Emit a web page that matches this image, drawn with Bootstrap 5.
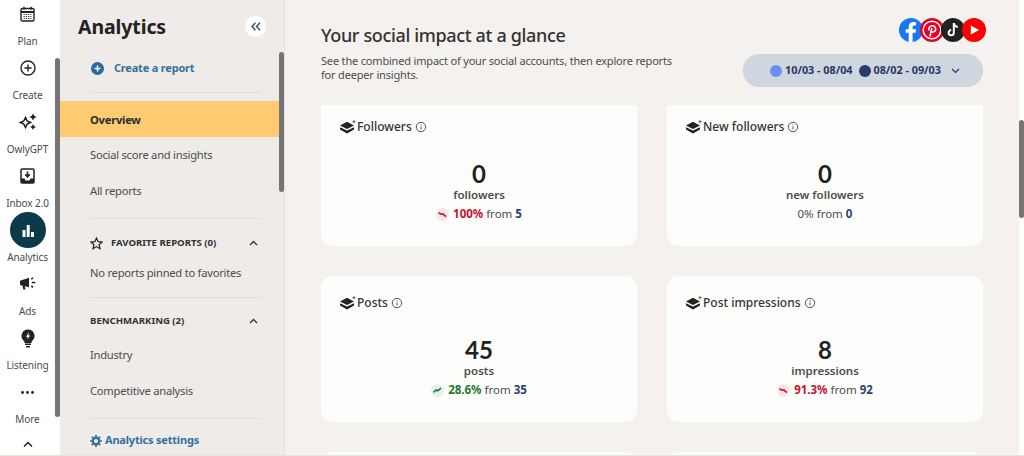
<!DOCTYPE html>
<html lang="en">
<head>
  <meta charset="UTF-8">
  <title>Analytics</title>
  <link rel="stylesheet" href="https://cdn.jsdelivr.net/npm/bootstrap@5.3.3/dist/css/bootstrap.min.css">
  <style>
    html, body { height: 456px; overflow: hidden; }
    body { font-family: "Noto Sans", "Liberation Sans", sans-serif; color: #2b2b2b; background: #fff; font-size: 12px; }
    .shell { width: 1024px; height: 456px; border-bottom: 1px solid #e8e6d8; overflow: hidden; }
    .rail { width: 60px; height: 456px; background: #fff; position: relative; flex: none; }
    .rail-thumb { position: absolute; left: 55px; top: 58px; width: 5px; height: 359px; background: #757575; border-radius: 3px; }
    .rail-item { width: 55px; height: 54px; color: #4b4b4b; font-size: 10px; letter-spacing: -.1px; }
    .rail-icon { height: 28px; }
    .rail-label { height: 26px; line-height: 26px; }
    .rail-dark { width: 36px; height: 36px; border-radius: 50%; background: #0c3a4a; margin-top: -4px; margin-bottom: -4px; flex: none; }
    .rail-more { width: 55px; padding-top: 9px; }
    .side { width: 225px; height: 456px; background: #eeebe8; border-right: 1px solid #e3e0dd; position: relative; flex: none; }
    .side-thumb { position: absolute; left: 219px; top: 52px; width: 5px; height: 140px; background: #757575; border-radius: 3px; }
    .side-title { font-size: 19.5px; font-weight: 700; color: #222; height: 54px; padding-left: 18px; line-height: 54px; letter-spacing: -.1px; }
    .collapse-btn { position: absolute; left: 185px; top: 16px; width: 21px; height: 21px; border-radius: 50%; background: #fff; }
    .create-row { height: 28px; padding-left: 31px; color: #35709f; font-weight: 700; font-size: 11px; letter-spacing: -.2px; gap: 10px; }
    .side-rule { height: 1px; background: #dfdcd9; margin-left: 30px; width: 171px; margin-top: 9px; }
    .create-row + .side-rule { margin-top: 10px; }
    .side-link { height: 36px; line-height: 36px; padding-left: 30px; width: 219px; color: #4d4d4d; font-size: 11.2px; letter-spacing: -.25px; }
    .side-link.active-link { background: #fecb72; color: #2b2b2b; font-weight: 700; line-height: 37px; margin-top: 8px; }
    .side-link.pinned-empty { margin-top: 8px; height: 30px; line-height: 30px; }
    .side-link.bench-first { margin-top: 9px; }
    .side-head { padding-left: 30px; width: 198px; color: #333; font-weight: 700; font-size: 9.6px; height: 14px; margin-top: 17px; }
    .side-head.bench-head { margin-top: 16px; }
    .settings-row { padding-left: 30px; color: #35709f; font-weight: 700; font-size: 11px; letter-spacing: -.2px; height: 43px; gap: 3px; }
    .main-area { width: 734px; height: 456px; background: #f4f1ee; flex: none; padding-left: 36px; overflow: hidden; }
    .top-block { height: 105px; width: 662px; }
    .page-title { font-size: 18px; font-weight: 500; color: #333; line-height: 24px; padding-top: 23px; margin: 0; letter-spacing: -.35px; }
    .page-sub { font-size: 11px; line-height: 14px; color: #4d4d4d; width: 356px; margin: 7px 0 0; letter-spacing: -.18px; }
    .social-logos { padding-top: 18px; margin-right: -3px; }
    .social-logos svg { margin-left: -3px; display: block; }
    .date-pill { width: 240px; height: 33px; border-radius: 16px; background: #d0d6df; color: #25375f; font-weight: 700; font-size: 10.8px; margin-top: 12px; gap: 3px; padding-left: 4px; }
    .date-dot { width: 12px; height: 12px; border-radius: 50%; }
    .dot-now { background: #6b8ff2; }
    .dot-prev { background: #2a3b6b; margin-left: 3px; }
    .pill-chev { margin-left: 7px; }
    .metric-grid { display: grid; grid-template-columns: 316px 316px; gap: 30px; }
    .metric-tile { height: 146px; background: #fdfdfb; border-radius: 12px; padding: 19px 19px 0; }
    .metric-tile.cut-top { height: 141px; border-top-left-radius: 0; border-top-right-radius: 0; padding-top: 14px; }
    .tile-head { font-size: 12px; color: #333; height: 16px; font-weight: 500; gap: 3px; }
    .tile-head svg:first-child { margin-right: -2px; }
    .tile-body { padding-top: 26px; }
    .tile-num { font-family: Lato, "Noto Sans", sans-serif; font-size: 24px; font-weight: 700; color: #222; line-height: 26px; }
    .tile-unit { font-size: 11.5px; font-weight: 600; color: #4d4d4d; line-height: 16px; }
    .tile-delta { font-size: 11.5px; color: #4d4d4d; line-height: 22px; }
    .delta-dot { width: 13px; height: 13px; border-radius: 50%; }
    .delta-dot.down { background: #f9e4e7; }
    .delta-dot.up { background: #e5f1e7; }
    .txt-down { color: #c2112f; font-weight: 700; }
    .txt-up { color: #1b7a2c; font-weight: 700; }
    .txt-from { color: #2d4274; font-weight: 700; }
    .main-scroll { width: 5px; height: 456px; background: #fff; position: relative; flex: none; }
    .main-thumb { position: absolute; left: 0; top: 120px; width: 5px; height: 98px; background: #757575; border-radius: 3px; }
  </style>
</head>
<body>
  <svg width="0" height="0" class="position-absolute">
    <symbol id="stack-ico" viewBox="0 0 16 14">
      <path d="M7 1.800 14 5.400 7 9 0 5.400z" fill="#222"/>
      <path d="M0 7.200 7 10.600 14 7.200V9.600L7 13.400 0 9.600z" fill="#222"/>
      <path d="M14 0v3.400M12.300 1.700h3.400" stroke="#666" stroke-width="1"/>
    </symbol>
    <symbol id="info-ico" viewBox="0 0 12 12">
      <circle cx="6" cy="6" r="4.700" fill="none" stroke="#555" stroke-width="1"/>
      <path d="M6 5.400v3M6 3.400v1" stroke="#555" stroke-width="1"/>
    </symbol>
    <symbol id="down-ico" viewBox="0 0 13 13">
      <path d="M2.500 4.800 5.200 6.200 6.800 5.800 10 8.600" fill="none" stroke="#c2112f" stroke-width="1.600"/>
    </symbol>
    <symbol id="up-ico" viewBox="0 0 13 13">
      <path d="M2.500 8.400 5.200 6 6.800 6.800 10 4.200" fill="none" stroke="#1b7a2c" stroke-width="1.600"/>
    </symbol>
  </svg>

  <div class="shell d-flex">
    <nav class="rail">
      <div class="rail-thumb"></div>
      <div class="rail-item d-flex flex-column align-items-center">
        <div class="rail-icon d-flex align-items-center">
          <svg width="15" height="16" viewBox="0 0 15 16"><rect x="1" y="2.500" width="13" height="12.500" rx="1.500" fill="none" stroke="#222" stroke-width="1.400"/><path d="M1 6h13" stroke="#222" stroke-width="2"/><path d="M4 .8v3M11 .8v3" stroke="#222" stroke-width="1.400"/><path d="M3.500 8.500h8M3.500 10.500h8M3.500 12.500h8" stroke="#444" stroke-width="1" stroke-dasharray="1.400 .9"/></svg>
        </div>
        <div class="rail-label">Plan</div>
      </div>
      <div class="rail-item d-flex flex-column align-items-center">
        <div class="rail-icon d-flex align-items-center">
          <svg width="16" height="16" viewBox="0 0 16 16"><circle cx="8" cy="8" r="7" fill="none" stroke="#222" stroke-width="1.400"/><path d="M8 4.400v7.200M4.400 8h7.200" stroke="#222" stroke-width="1.400"/></svg>
        </div>
        <div class="rail-label">Create</div>
      </div>
      <div class="rail-item d-flex flex-column align-items-center">
        <div class="rail-icon d-flex align-items-center">
          <svg width="18" height="18" viewBox="0 0 18 18"><path d="M6.500 4.500 8.200 8 11.500 9.500 8.200 11 6.500 14.500 4.800 11 1.500 9.500 4.800 8z" fill="none" stroke="#222" stroke-width="1.600"/><path d="M14 .5 15.200 2.800 17.500 4 15.200 5.200 14 7.500 12.800 5.200 10.500 4 12.800 2.800z" fill="#222"/><path d="M14 11 15 13 17 14 15 15 14 17 13 15 11 14 13 13z" fill="#222"/></svg>
        </div>
        <div class="rail-label">OwlyGPT</div>
      </div>
      <div class="rail-item d-flex flex-column align-items-center">
        <div class="rail-icon d-flex align-items-center">
          <svg width="15" height="16" viewBox="0 0 15 16"><rect x="1" y="1" width="13" height="14" rx="1.200" fill="none" stroke="#222" stroke-width="1.500"/><path d="M1 10.500h3.500l1 2h4l1-2H14V15H1z" fill="#222"/><path d="M7.500 3.500v5M5.200 6.400 7.500 8.800 9.800 6.400" fill="none" stroke="#222" stroke-width="1.600"/></svg>
        </div>
        <div class="rail-label">Inbox 2.0</div>
      </div>
      <div class="rail-item d-flex flex-column align-items-center">
        <div class="rail-icon d-flex align-items-center">
          <div class="rail-dark d-flex align-items-center justify-content-center">
            <svg width="14" height="13" viewBox="0 0 14 13"><path d="M1.500 6h3v7h-3zM5.700 1h3v12h-3zM10 8h3v5h-3z" fill="#fff"/></svg>
          </div>
        </div>
        <div class="rail-label">Analytics</div>
      </div>
      <div class="rail-item d-flex flex-column align-items-center">
        <div class="rail-icon d-flex align-items-center">
          <svg width="17" height="14" viewBox="0 0 17 14"><path d="M1 3.800 10 .8v9.400L1 8z" fill="#222"/><path d="M3.300 8.500 4.300 12.500h2.200L5.900 9.200" fill="#222"/><path d="M12.300 2 14 .8M12.800 5.500h3.500M12.300 9l1.700 1.300" stroke="#222" stroke-width="1.600"/></svg>
        </div>
        <div class="rail-label">Ads</div>
      </div>
      <div class="rail-item d-flex flex-column align-items-center">
        <div class="rail-icon d-flex align-items-center">
          <svg width="14" height="19" viewBox="0 0 14 19"><path d="M7 .5a6.500 6.500 0 0 1 3.600 11.900V14H3.400v-1.600A6.500 6.500 0 0 1 7 .5z" fill="#222"/><path d="M4 15.300h6M5 17.800h4" stroke="#222" stroke-width="1.500"/><path d="M8 3 5 8h2l-1 3 3.200-4.500H7.400z" fill="#fff"/></svg>
        </div>
        <div class="rail-label">Listening</div>
      </div>
      <div class="rail-item d-flex flex-column align-items-center">
        <div class="rail-icon d-flex align-items-center">
          <svg width="13" height="3" viewBox="0 0 13 3"><circle cx="1.500" cy="1.500" r="1.400" fill="#222"/><circle cx="6.500" cy="1.500" r="1.400" fill="#222"/><circle cx="11.500" cy="1.500" r="1.400" fill="#222"/></svg>
        </div>
        <div class="rail-label">More</div>
      </div>
      <div class="rail-more d-flex justify-content-center">
        <svg width="10" height="7" viewBox="0 0 10 7"><path d="M1 5.500 5 1.500 9 5.500" fill="none" stroke="#222" stroke-width="1.500"/></svg>
      </div>
    </nav>

    <aside class="side">
      <div class="side-thumb"></div>
      <div class="side-title">Analytics</div>
      <div class="collapse-btn d-flex align-items-center justify-content-center">
        <svg width="10" height="9" viewBox="0 0 10 9"><path d="M4.500 .8 1 4.500 4.500 8.200M9 .8 5.500 4.500 9 8.200" fill="none" stroke="#2d4274" stroke-width="1.300"/></svg>
      </div>
      <div class="create-row d-flex align-items-center">
        <svg width="13" height="13" viewBox="0 0 13 13"><circle cx="6.500" cy="6.500" r="6.500" fill="#2a6a9e"/><path d="M6.500 3.500v6M3.500 6.500h6" stroke="#fff" stroke-width="1.500"/></svg>
        <span>Create a report</span>
      </div>
      <div class="side-rule"></div>
      <div class="side-link active-link">Overview</div>
      <div class="side-link">Social score and insights</div>
      <div class="side-link">All reports</div>
      <div class="side-rule"></div>
      <div class="side-head d-flex align-items-center justify-content-between">
        <span class="d-flex align-items-center gap-2">
          <svg width="13" height="13" viewBox="0 0 13 13"><path d="M6.500 1 8.100 4.700 12 5.100 9.100 7.700 10 11.700 6.500 9.600 3 11.700 3.900 7.700 1 5.100 4.900 4.700z" fill="none" stroke="#222" stroke-width="1.200"/></svg>
          <span>FAVORITE REPORTS (0)</span>
        </span>
        <svg width="9" height="6" viewBox="0 0 9 6"><path d="M1 5 4.500 1.500 8 5" fill="none" stroke="#333" stroke-width="1.300"/></svg>
      </div>
      <div class="side-link pinned-empty">No reports pinned to favorites</div>
      <div class="side-rule"></div>
      <div class="side-head bench-head d-flex align-items-center justify-content-between">
        <span>BENCHMARKING (2)</span>
        <svg width="9" height="6" viewBox="0 0 9 6"><path d="M1 5 4.500 1.500 8 5" fill="none" stroke="#333" stroke-width="1.300"/></svg>
      </div>
      <div class="side-link bench-first">Industry</div>
      <div class="side-link">Competitive analysis</div>
      <div class="side-rule"></div>
      <div class="settings-row d-flex align-items-center">
        <svg width="12" height="12" viewBox="0 0 11 11"><circle cx="5.500" cy="5.500" r="3" fill="none" stroke="#35709f" stroke-width="2.200"/><path d="M5.500 0v2M5.500 9v2M0 5.500h2M9 5.500h2M1.600 1.600 3 3M8 8l1.400 1.400M1.600 9.400 3 8M8 3l1.400-1.400" stroke="#35709f" stroke-width="1.500"/></svg>
        <span>Analytics settings</span>
      </div>
    </aside>

    <main class="main-area">
      <div class="top-block d-flex justify-content-between">
        <div>
          <h1 class="page-title">Your social impact at a glance</h1>
          <p class="page-sub">See the combined impact of your social accounts, then explore reports for deeper insights.</p>
        </div>
        <div class="d-flex flex-column align-items-end">
          <div class="social-logos d-flex">
            <svg width="24" height="24" viewBox="0 0 24 24"><circle cx="12" cy="12" r="12" fill="#1877f2"/><path d="M13.600 24v-9.200h3l.5-3.500h-3.500V9.200c0-1 .5-2 2-2h1.600V4.200s-1.400-.3-2.800-.3c-2.900 0-4.700 1.700-4.700 4.900v2.500H6.600v3.500h3.100V24z" fill="#fff"/></svg>
            <svg width="24" height="24" viewBox="0 0 24 24"><circle cx="12" cy="12" r="12" fill="#e60023"/><circle cx="12" cy="12" r="8.800" fill="none" stroke="#fff" stroke-width="1.500"/><path d="M10 18.500 11.800 10M9 12.500c-1-2.500.8-4.700 3.300-4.700 2.400 0 3.700 1.700 3.300 3.700-.4 2-2.600 3.400-4.300 2" fill="none" stroke="#fff" stroke-width="1.600"/></svg>
            <svg width="24" height="24" viewBox="0 0 24 24"><circle cx="12" cy="12" r="12" fill="#222"/><path d="M12.800 5v9.700a2.600 2.600 0 1 1-2.600-2.600M12.800 5.200c.3 2.200 1.800 3.600 4 3.800" fill="none" stroke="#fff" stroke-width="2"/></svg>
            <svg width="24" height="24" viewBox="0 0 24 24"><circle cx="12" cy="12" r="12" fill="#f00"/><path d="M8.800 7.500 17.200 12 8.800 16.500z" fill="#fff"/></svg>
          </div>
          <div class="date-pill d-flex align-items-center justify-content-center">
            <span class="date-dot dot-now"></span><span>10/03 - 08/04</span>
            <span class="date-dot dot-prev"></span><span>08/02 - 09/03</span>
            <svg class="pill-chev" width="9" height="6" viewBox="0 0 9 6"><path d="M1 1 4.500 4.500 8 1" fill="none" stroke="#25375f" stroke-width="1.200"/></svg>
          </div>
        </div>
      </div>

      <div class="metric-grid">
        <div class="metric-tile cut-top">
          <div class="tile-head d-flex align-items-center"><svg width="16" height="14"><use href="#stack-ico"/></svg><span>Followers</span><svg width="12" height="12"><use href="#info-ico"/></svg></div>
          <div class="tile-body text-center">
            <div class="tile-num">0</div>
            <div class="tile-unit">followers</div>
            <div class="tile-delta d-flex align-items-center justify-content-center gap-1"><span class="delta-dot down d-flex"><svg width="13" height="13"><use href="#down-ico"/></svg></span><span><span class="txt-down">100%</span> from <span class="txt-from">5</span></span></div>
          </div>
        </div>
        <div class="metric-tile cut-top">
          <div class="tile-head d-flex align-items-center"><svg width="16" height="14"><use href="#stack-ico"/></svg><span>New followers</span><svg width="12" height="12"><use href="#info-ico"/></svg></div>
          <div class="tile-body text-center">
            <div class="tile-num">0</div>
            <div class="tile-unit">new followers</div>
            <div class="tile-delta"><span>0%</span> from <span class="txt-from">0</span></div>
          </div>
        </div>
        <div class="metric-tile">
          <div class="tile-head d-flex align-items-center"><svg width="16" height="14"><use href="#stack-ico"/></svg><span>Posts</span><svg width="12" height="12"><use href="#info-ico"/></svg></div>
          <div class="tile-body text-center">
            <div class="tile-num">45</div>
            <div class="tile-unit">posts</div>
            <div class="tile-delta d-flex align-items-center justify-content-center gap-1"><span class="delta-dot up d-flex"><svg width="13" height="13"><use href="#up-ico"/></svg></span><span><span class="txt-up">28.6%</span> from <span class="txt-from">35</span></span></div>
          </div>
        </div>
        <div class="metric-tile">
          <div class="tile-head d-flex align-items-center"><svg width="16" height="14"><use href="#stack-ico"/></svg><span>Post impressions</span><svg width="12" height="12"><use href="#info-ico"/></svg></div>
          <div class="tile-body text-center">
            <div class="tile-num">8</div>
            <div class="tile-unit">impressions</div>
            <div class="tile-delta d-flex align-items-center justify-content-center gap-1"><span class="delta-dot down d-flex"><svg width="13" height="13"><use href="#down-ico"/></svg></span><span><span class="txt-down">91.3%</span> from <span class="txt-from">92</span></span></div>
          </div>
        </div>
        <div class="metric-tile"></div>
        <div class="metric-tile"></div>
      </div>
    </main>

    <div class="main-scroll"><div class="main-thumb"></div></div>
  </div>
</body>
</html>
